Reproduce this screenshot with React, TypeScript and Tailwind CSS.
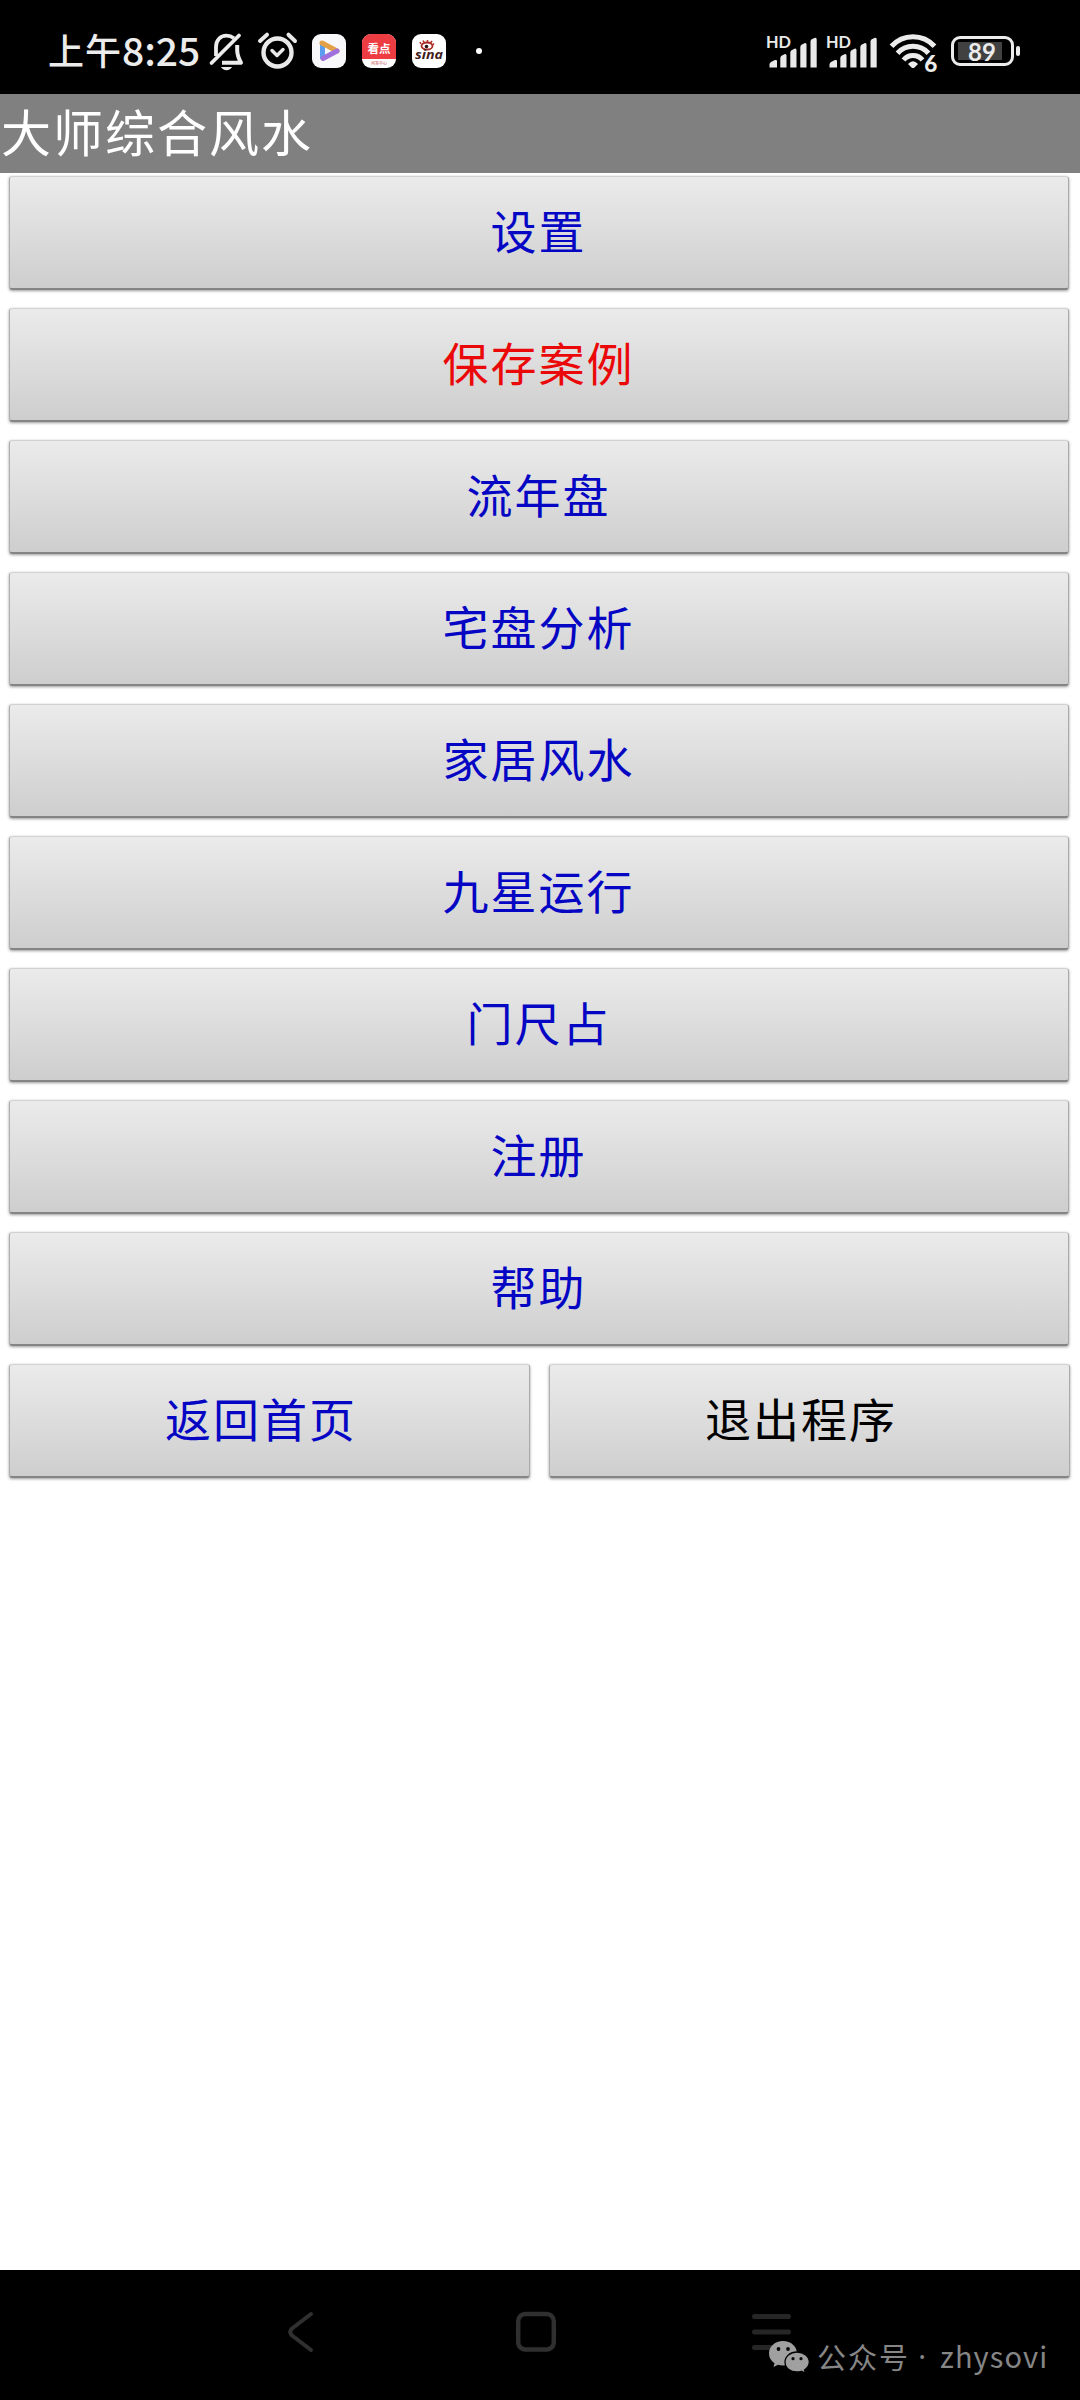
import React from "react";

const CJK = "font-['Noto_Sans_CJK_SC',sans-serif]";

function BellOff() {
  return (
    <svg className="ml-[8px] block h-[42px] w-[40px] shrink-0" viewBox="206 30 40 42" fill="none" stroke="#ececec">
      <path d="M216 56V47C216 40 220.500 35.700 226.500 35.700C229.500 35.700 232 36.800 234 38.300" strokeWidth="3.800" />
      <path d="M237.200 45V50.500C237.200 55 238.500 58 241 62.700H222" strokeWidth="4" strokeLinejoin="round" />
      <path d="M211.500 63L239 35.500" strokeWidth="3.800" strokeLinecap="round" />
      <path d="M221 67H232C231 69 229 70.200 226.500 70.200S222 69 221 67Z" fill="#ececec" stroke="none" />
    </svg>
  );
}

function Alarm() {
  return (
    <svg className="ml-[10px] block h-[42px] w-[44px] shrink-0" viewBox="256 30 44 42" fill="none" stroke="#e9e9e9" strokeLinecap="round">
      <circle cx="277.500" cy="52.500" r="14" strokeWidth="4.400" />
      <path d="M272 50.500L277 55.500L283 49.500" strokeWidth="3.400" strokeLinejoin="round" />
      <path d="M260 41L267 34.700M288.500 34.700L295 41" strokeWidth="4" />
    </svg>
  );
}

function VideoApp() {
  return (
    <svg className="ml-[12px] block h-[34px] w-[34px] shrink-0" viewBox="0 0 34 34">
      <rect width="34" height="34" rx="9" fill="#f8f8fa" />
      <path d="M10.500 9V25" stroke="#5b9df0" strokeWidth="5" />
      <path d="M10 9L25 17" stroke="#e3a047" strokeWidth="5" strokeLinecap="round" />
      <path d="M11 24.500L25 17" stroke="#a071dd" strokeWidth="5" strokeLinecap="round" />
    </svg>
  );
}

function NewsApp() {
  return (
    <div className={`ml-[16px] flex h-[34px] w-[34px] shrink-0 flex-col overflow-hidden rounded-[9px] bg-white text-center ${CJK}`}>
      <div className="h-[25px] bg-[#ee3d42] text-[11.5px] leading-[28px] font-bold whitespace-nowrap text-white">看点</div>
      <div className="h-[9px] text-[4px] leading-[9px] whitespace-nowrap text-[#c04848]">问答中心</div>
    </div>
  );
}

function SinaApp() {
  return (
    <svg className="ml-[16px] block h-[34px] w-[34px] shrink-0" viewBox="0 0 34 34">
      <rect width="34" height="34" rx="9" fill="#fff" />
      <ellipse cx="15" cy="12" rx="5.500" ry="3.500" fill="none" stroke="#a92b27" strokeWidth="1.800" />
      <circle cx="14.500" cy="12.500" r="1.800" fill="#2a1414" />
      <path d="M9 10L8 8M12 8.500L11 6.500M15.500 8V6M18.500 9L20 7M20.500 11L22 9.500" stroke="#b8322c" strokeWidth="1.600" />
      <text x="17" y="24.500" textAnchor="middle" textLength="28" lengthAdjust="spacingAndGlyphs" fontFamily="Open Sans, sans-serif" fontSize="12.500" fontWeight="700" fontStyle="italic" fill="#431c1c">sina</text>
    </svg>
  );
}

function Signal({ className }: { className: string }) {
  return (
    <svg className={`block h-[40px] w-[52px] shrink-0 ${className}`} viewBox="766 30 52 40" fill="#e9e9e9">
      <text x="766" y="46.700" fontFamily="Lato, sans-serif" fontSize="16.200" fontWeight="700" textLength="25" lengthAdjust="spacingAndGlyphs">HD</text>
      <path d="M769.500 63.500Q769.500 62 771 61L775 59Q777 58.500 777 60V66.500H769.500Z" />
      <path d="M780.300 57Q780.300 55.500 781.500 54.700L785 53Q786.500 52.800 786.500 54.500V66.500H780.300Z" />
      <path d="M790.300 51.500Q790.300 50 791.500 49.300L795 47.500Q796.500 47.300 796.500 49V66.500H790.300Z" />
      <path d="M800.300 46Q800.300 44.500 801.500 43.700L805 42Q806.500 41.800 806.500 43.500V66.500H800.300Z" />
      <path d="M810.500 40.500Q810.500 39 811.700 38.200L815 36.800Q816.700 36.500 816.700 38.500V66.500H810.500Z" />
    </svg>
  );
}

function Wifi() {
  return (
    <svg className="ml-[11px] block h-[54px] w-[50px] shrink-0" viewBox="889 24 50 54">
      <g fill="none" stroke="#ececec" strokeWidth="5">
        <path d="M891.500 46.300A29 29 0 0 1 934.500 46.300" />
        <path d="M897.500 53.200A21 21 0 0 1 928.500 53.200" />
        <path d="M903.500 60A12.500 12.500 0 0 1 922.500 60" />
      </g>
      <path d="M908 64Q913 58.500 918 64L914.500 67.500Q913 68.700 911.500 67.500Z" fill="#ececec" />
      <text x="930.700" y="71.500" textAnchor="middle" fontFamily="Lato, sans-serif" fontSize="22.500" fontWeight="900" fill="#ececec" stroke="#000" strokeWidth="2.500" paintOrder="stroke">6</text>
    </svg>
  );
}

function Battery() {
  return (
    <div className="ml-[12px] flex shrink-0 items-center gap-[2px]">
      <div className="h-[30px] w-[63px] rounded-[9px] border-[3px] border-[#ececec] px-[4px] py-[3px]">
        <div className="h-[18px] w-[44px] bg-[#414141] pl-[4px] text-center font-['Lato',sans-serif] text-[24px] leading-[19px] font-bold text-[#ececec]">
          89
        </div>
      </div>
      <div className="h-[10px] w-[4px] rounded-[2px] bg-[#ececec]" />
    </div>
  );
}

function MenuButton({ label, color, className = "" }: { label: string; color: string; className?: string }) {
  return (
    <button
      className={`block h-[114px] min-w-0 flex-1 rounded-[3px] border border-t-[#d2d2d2] border-r-[#aaaaaa] border-b-2 border-b-[#858585] border-l-[#b0b0b0] bg-linear-to-b from-[#ebebeb] to-[#cecece] pb-[6px] text-[46px] leading-[105px] tracking-[2px] whitespace-nowrap shadow-[0_1px_3px_rgba(0,0,0,0.4)] ${color} ${CJK} ${className}`}
    >
      {label}
    </button>
  );
}

const rows = [
  { label: "设置", color: "text-[#0505c4]" },
  { label: "保存案例", color: "text-[#ea0808]" },
  { label: "流年盘", color: "text-[#0505c4]" },
  { label: "宅盘分析", color: "text-[#0505c4]" },
  { label: "家居风水", color: "text-[#0505c4]" },
  { label: "九星运行", color: "text-[#0505c4]" },
  { label: "门尺占", color: "text-[#0505c4]" },
  { label: "注册", color: "text-[#0505c4]" },
  { label: "帮助", color: "text-[#0505c4]" },
];

export default function App() {
  return (
    <div className={`flex h-[2400px] w-[1080px] flex-col overflow-hidden bg-white ${CJK}`}>
      <header className="flex h-[94px] shrink-0 items-center bg-black pt-[8px] pl-[48px] text-[#ececec]">
        <div className="flex w-[150px] shrink-0 items-center pb-[5px] whitespace-nowrap">
          <span className="text-[36px] leading-[50px] font-medium tracking-[1px]">上午</span>
          <span className="text-[39px] leading-[50px] font-medium">8:25</span>
        </div>
        <BellOff />
        <Alarm />
        <VideoApp />
        <NewsApp />
        <SinaApp />
        <div className="ml-[30px] h-[6px] w-[6px] rounded-full bg-white" />
        <div className="ml-auto flex items-center pr-[60px]">
          <Signal className="" />
          <Signal className="ml-[8px]" />
          <Wifi />
          <Battery />
        </div>
      </header>

      <h1 className="h-[79px] shrink-0 bg-[#808080] pl-[1px] text-[50px] leading-[73px] tracking-[2px] text-white">
        大师综合风水
      </h1>

      <main className="flex flex-1 flex-col gap-[18px] pt-[3px] pr-[10px] pl-[9px]">
        {rows.map((row) => (
          <div key={row.label} className="flex pr-px">
            <MenuButton label={row.label} color={row.color} className="pr-[1px]" />
          </div>
        ))}
        <div className="flex gap-[19px]">
          <MenuButton label="返回首页" color="text-[#0505c4]" className="pr-[17px]" />
          <MenuButton label="退出程序" color="text-black" className="pr-[17px]" />
        </div>
      </main>

      <footer className="relative h-[130px] shrink-0 bg-black">
        <nav className="flex pt-[40px] pl-[284px]">
          <svg className="h-[44px] w-[36px]" viewBox="284 2310 36 44" fill="none" stroke="#303030" strokeWidth="4" strokeLinecap="round" strokeLinejoin="round">
            <path d="M311 2314L292 2328.500Q288.500 2332 292 2335.500L311 2350" />
          </svg>
          <svg className="ml-[194px] h-[44px] w-[44px]" viewBox="514 2310 44 44" fill="none" stroke="#303030" strokeWidth="4.500">
            <rect x="518.200" y="2314" width="35.600" height="35.500" rx="7" />
          </svg>
          <svg className="ml-[192px] h-[44px] w-[44px]" viewBox="750 2310 44 44" stroke="#262626" strokeWidth="5" strokeLinecap="round">
            <path d="M754.500 2316.500H788.500M754.500 2332H788.500M754.500 2347.500H788.500" />
          </svg>
        </nav>
        <div className="absolute top-[67px] left-[768px] flex items-start whitespace-nowrap text-[#868686]">
          <svg className="mt-[2px] h-[36px] w-[42px]" viewBox="768 2339 42 36">
            <path d="M783 2341C775 2341 769 2346.500 769 2353.500C769 2357.500 771 2361 774.500 2363.300L773.500 2367L778 2364.800C779.600 2365.300 781.200 2365.500 783 2365.500C791 2365.500 797 2360 797 2353.500C797 2346.500 791 2341 783 2341Z" fill="#a0a0a0" />
            <path d="M797 2352C790 2352 785 2356.500 785 2362C785 2368 790 2372 797 2372C798.500 2372 800 2371.800 801.500 2371.300L805.500 2373.300L804.500 2370C807.500 2368 809.300 2365.300 809.300 2362C809.300 2356.500 804 2352 797 2352Z" fill="#a0a0a0" stroke="#000" strokeWidth="1.300" />
            <g fill="#080808">
              <circle cx="778.500" cy="2349" r="1.900" />
              <circle cx="788" cy="2349" r="1.900" />
              <circle cx="793" cy="2358.700" r="1.600" />
              <circle cx="801" cy="2358.700" r="1.600" />
            </g>
          </svg>
          <span className="ml-[7px] text-[29px] leading-[38px] tracking-[2px]">公众号</span>
          <span className="w-[24px] text-center font-['Noto_Sans',sans-serif] text-[29px] leading-[38px]">·</span>
          <span className="ml-[6px] text-[29px] leading-[36px] tracking-[1.1px]">zhysovi</span>
        </div>
      </footer>
    </div>
  );
}
